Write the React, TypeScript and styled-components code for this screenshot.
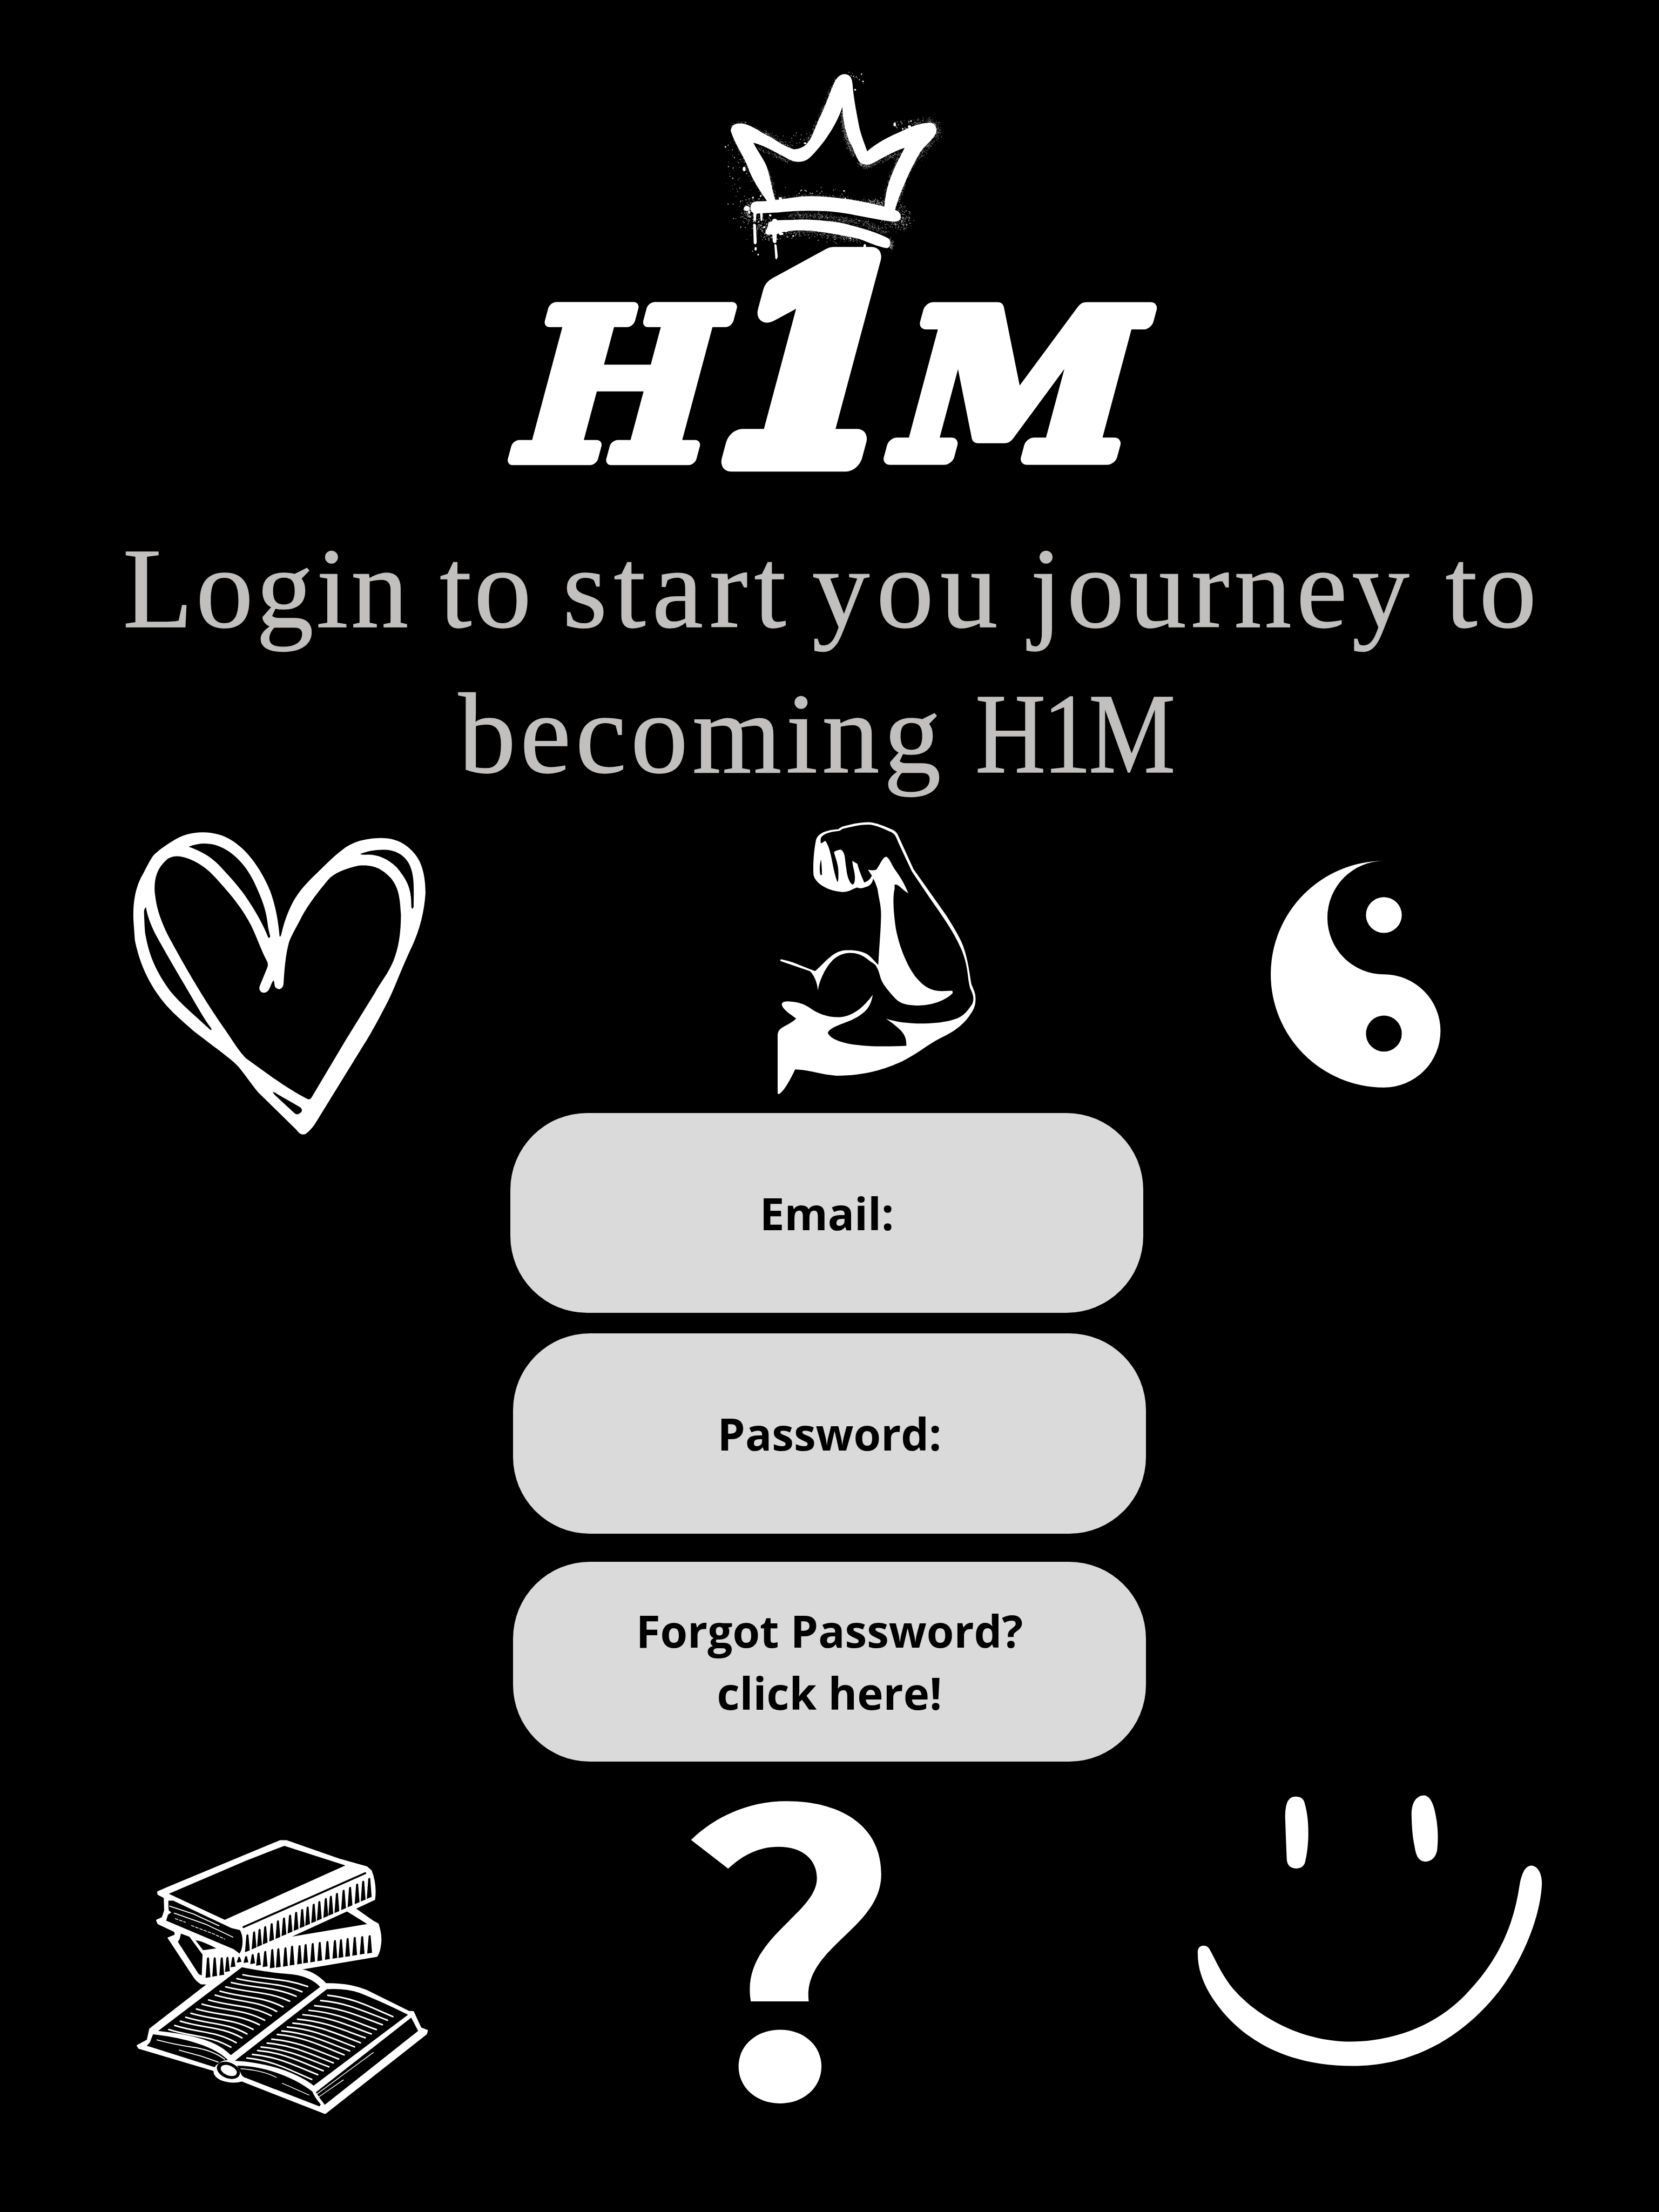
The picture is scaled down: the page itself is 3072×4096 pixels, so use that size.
import React from "react";
import styled, { createGlobalStyle } from "styled-components";

/* Design units: the poster is laid out on a 3456 x 4608 grid. */
const u = (n: number) => `${((n * 8) / 9).toFixed(3)}px`;

const GlobalStyle = createGlobalStyle`
  html, body { margin: 0; padding: 0; background: #000; }
  *, *::before, *::after { box-sizing: border-box; }
`;

const Page = styled.main`
  width: ${u(3456)};
  height: ${u(4608)};
  overflow: hidden;
  background: #000;
  color: #fff;
  display: flex;
  flex-direction: column;
`;

const LogoArea = styled.header`
  flex: none;
  height: ${u(1010)};
  padding-top: ${u(120)};
  padding-left: ${u(1030)};
`;

const Art = styled.svg<{ $w: number; $h: number; $ml?: number; $mt?: number }>`
  display: block;
  flex: none;
  width: ${(p) => u(p.$w)};
  height: ${(p) => u(p.$h)};
  margin-left: ${(p) => u(p.$ml ?? 0)};
  margin-top: ${(p) => u(p.$mt ?? 0)};
  overflow: visible;
  fill: #fff;
`;

const Heading = styled.h1`
  flex: none;
  margin: 0;
  height: ${u(680)};
  padding-top: ${u(66)};
  font-family: "Liberation Serif", "Times New Roman", serif;
  font-weight: 400;
  font-size: ${u(239)};
  line-height: ${u(301.6)};
  color: #c1c0be;
  -webkit-text-stroke: 1.5px #c1c0be;
`;

const HeadingLine = styled.span<{ $start: number }>`
  display: flex;
  padding-left: ${(p) => u(p.$start)};
  white-space: pre;
`;

const Word = styled.span<{ $w: number; $ls: number; $sx?: number }>`
  flex: none;
  width: ${(p) => u(p.$w)};
  letter-spacing: ${(p) => u(p.$ls)};
  transform: scaleX(${(p) => p.$sx ?? 1});
  transform-origin: left center;
`;

const IconRow = styled.section<{ $h: number }>`
  flex: none;
  display: flex;
  align-items: flex-start;
  height: ${(p) => u(p.$h)};
`;

const Form = styled.form`
  flex: none;
  margin: 0;
  display: flex;
  flex-direction: column;
  padding-left: ${u(1063.4)};
  height: ${u(1381.4)};
`;

const Field = styled.button<{ $shift?: number; $gap?: number }>`
  flex: none;
  appearance: none;
  border: 0;
  margin: 0 0 ${(p) => u(p.$gap ?? 0)} ${(p) => u(p.$shift ?? 0)};
  padding: 0;
  width: ${u(1318)};
  height: ${u(416.5)};
  border-radius: ${u(160)};
  background: #dadada;
  color: #000;
  display: flex;
  align-items: center;
  justify-content: center;
  text-align: center;
  white-space: pre-line;
  font-family: "Open Sans", "Noto Sans", sans-serif;
  font-weight: 700;
  font-size: ${u(92)};
  line-height: ${u(129.5)};
`;

const Question = styled.span`
  flex: none;
  display: block;
  margin-left: ${u(477)};
  width: ${u(395)};
  height: ${u(646)};
  font-family: "Noto Sans CJK SC", sans-serif;
  font-weight: 700;
  font-size: ${u(799)};
  line-height: ${u(646)};
  color: #fff;
  transform: scaleX(1.18);
  transform-origin: left center;
`;

/* ---------- spray paint grain ---------- */

type Pt = [number, number];

function makeRandom(seed: number) {
  let s = seed;
  return () => {
    s = (s * 1664525 + 1013904223) % 4294967296;
    return s / 4294967296;
  };
}

function grain(line: Pt[], count: number, spread: number, size: number, seed: number) {
  const rnd = makeRandom(seed);
  let d = "";
  for (let i = 0; i < count; i++) {
    const t = rnd() * (line.length - 1);
    const k = Math.floor(t);
    const f = t - k;
    const [x0, y0] = line[k];
    const [x1, y1] = line[k + 1];
    const g = () => rnd() + rnd() + rnd() - 1.5;
    const x = x0 + (x1 - x0) * f + g() * spread;
    const y = y0 + (y1 - y0) * f + g() * spread;
    const r = size * (0.5 + rnd());
    d += `M${x.toFixed(1)} ${y.toFixed(1)}h${r.toFixed(1)}v${r.toFixed(1)}h-${r.toFixed(1)}z`;
  }
  return d;
}

const GRAINS: [Pt[], number, number, number][] = [
  [[[1260, 420], [1350, 400], [1405, 420], [1410, 480], [1350, 550], [1290, 620]], 650, 32, 2.6],
  [[[822, 340], [835, 440], [860, 530], [900, 610]], 500, 20, 2.6],
  [[[925, 660], [980, 675], [1060, 640], [1190, 590]], 380, 20, 2.6],
  [[[1190, 600], [1130, 730], [1095, 900]], 400, 18, 2.6],
  [[[1300, 600], [1230, 740], [1170, 900]], 180, 15, 2.6],
  [[[130, 430], [190, 405], [330, 465], [400, 500], [500, 565]], 350, 17, 2.6],
  [[[600, 530], [660, 410], [740, 230], [780, 140]], 260, 14, 2.6],
  [[[290, 560], [400, 610], [500, 650]], 150, 15, 2.6],
  [[[350, 700], [385, 790], [400, 880]], 140, 13, 2.6],
  [[[140, 500], [220, 680], [330, 870]], 150, 18, 2.6],
  [[[400, 880], [640, 860], [850, 880], [1090, 920]], 260, 20, 3],
  [[[980, 900], [1080, 905]], 110, 24, 3.5],
  [[[1170, 910], [1215, 1000], [1190, 1045], [1080, 1035]], 240, 46, 3.6],
  [[[480, 985], [640, 985], [800, 1005], [960, 1030], [1090, 1090]], 750, 24, 2.6],
  [[[440, 1090], [640, 1090], [800, 1115], [920, 1140]], 350, 22, 3],
  [[[1120, 1130], [1130, 1190]], 110, 18, 2.6],
  [[[260, 890], [225, 950], [250, 1000], [340, 1040], [350, 1110]], 280, 50, 4.4],
  [[[110, 560], [160, 640], [160, 800], [180, 1000], [290, 1220]], 60, 60, 5],
  [[[480, 520], [600, 480]], 24, 50, 4],
  [[[440, 830], [840, 830]], 20, 36, 5],
  [[[870, 100], [950, 150]], 18, 30, 5],
  [[[1150, 400], [1240, 420]], 22, 34, 5],
  [[[300, 1130], [540, 1110], [860, 1140]], 40, 34, 5],
];

const GRAIN_PATH = GRAINS.map(([l, n, s, z], i) => grain(l, n, s, z, 17 + i * 101)).join("");

const BLOBS: [number, number, number, number][] = [
  [209, 695, 9, 14], [1150, 417, 8, 12], [225, 942, 18, 16], [436, 880, 10, 9], [903, 200, 6, 6],
  [92, 557, 5, 5], [952, 148, 5, 5], [943, 102, 4, 4], [1252, 396, 5, 5], [566, 828, 4, 4],
  [833, 832, 5, 5], [841, 878, 5, 5], [872, 1128, 5, 5], [963, 1176, 8, 12], [516, 1114, 6, 5],
  [590, 534, 8, 6], [372, 985, 8, 7], [264, 874, 6, 6], [312, 864, 5, 6], [281, 1194, 7, 11],
  [297, 1230, 5, 6], [240, 965, 6, 12], [335, 1058, 7, 6], [400, 1020, 16, 14], [440, 1100, 14, 8],
  [470, 1082, 14, 7], [360, 1090, 18, 16], [372, 1045, 14, 20], [1242, 430, 10, 8], [1200, 445, 5, 5],
];

function Crown() {
  return (
    <g transform="translate(1480 120) scale(0.33333)">
      <path d="M125 455C130 420 150 410 190 410C250 415 300 458 340 478C400 505 450 552 520 572C560 570 590 555 610 525C640 490 660 410 690 355C720 290 740 230 770 160C790 115 815 100 840 102C875 105 885 135 887 170C895 270 915 360 930 440C945 500 965 545 978 585C1040 530 1110 495 1180 465C1240 435 1300 408 1370 405C1400 408 1412 430 1411 460C1405 500 1340 545 1310 590C1270 660 1240 720 1215 780C1185 850 1165 900 1150 960L1085 940C1090 850 1110 780 1140 710C1160 660 1190 610 1212 563C1130 590 1080 625 1010 660C980 675 945 670 925 645C905 610 890 560 865 520C840 450 825 390 823 308C800 380 760 450 710 520C670 570 640 610 605 635C570 655 530 655 495 638C420 600 340 550 267 531C290 580 330 630 350 680C375 750 380 820 408 900L355 900C300 820 260 760 235 690C210 620 150 540 125 455Z" />
      <path d="M250 930C250 905 270 897 300 897C400 895 480 875 560 868C640 860 740 868 840 882C940 895 1060 920 1150 950C1180 958 1190 980 1188 1000C1180 1025 1150 1028 1120 1022C1030 1010 920 985 840 972C700 950 560 955 470 962C400 970 330 970 280 975C255 970 248 955 250 930Z" />
      <path d="M345 1080C360 1050 365 1020 400 1015C500 1015 560 1008 620 1012C720 1018 800 1025 870 1045C950 1065 1050 1095 1110 1128C1130 1145 1125 1190 1100 1190C1040 1180 980 1150 920 1130C820 1110 740 1095 650 1083C560 1078 480 1075 420 1100C390 1110 350 1110 345 1080Z" />
      <path d="M267 965L286 965L283 1015Q276 1026 269 1014ZM308 965L325 965L323 1016Q317 1025 312 1016ZM265 1040Q274 1032 283 1044L288 1155Q278 1176 269 1158ZM384 1090L413 1090L411 1152Q399 1168 388 1148ZM398 1168Q405 1160 412 1172L419 1240Q413 1268 404 1254Z" />
      {BLOBS.map(([x, y, rx, ry]) => (
        <ellipse key={`${x}-${y}`} cx={x} cy={y} rx={rx} ry={ry} />
      ))}
      <path d={GRAIN_PATH} opacity="0.7" />
    </g>
  );
}

const logoLetter = {
  fontFamily: '"DejaVu Serif", serif',
  fontWeight: 700,
  stroke: "#fff",
  strokeLinejoin: "round" as const,
};

function Logo() {
  return (
    <Art $w={1400} $h={890} viewBox="1030 120 1400 890" role="img" aria-label="H1M">
      <Crown />
      <g {...logoLetter}>
        <text transform="translate(1051 955) skewX(-15)" fontSize="429" strokeWidth="27">H</text>
        <text transform="translate(1458 954) skewX(-15) scale(0.94 1)" fontSize="555" strokeWidth="56">1</text>
        <text transform="translate(1839 952) skewX(-15) scale(1.055 1)" fontSize="421" strokeWidth="32">M</text>
      </g>
    </Art>
  );
}

function Heart() {
  return (
    <Art $w={680} $h={700} $ml={250} $mt={10} viewBox="0 0 1568 1568" preserveAspectRatio="none">
      <path
        fillRule="evenodd"
        d="M65 485C62 400 75 330 110 272C130 235 145 205 160 185C190 155 230 130 270 107C315 82 360 76 405 76C480 78 535 105 580 145C640 195 690 275 722 350C750 425 762 500 767 562Q772 566 776 550C790 490 810 440 835 395C865 345 905 305 945 268C990 225 1030 185 1075 153C1120 122 1170 105 1255 103C1330 104 1375 130 1415 175C1455 220 1468 290 1468 360C1462 450 1440 530 1405 605C1360 695 1325 790 1290 860C1250 935 1210 1010 1170 1070L935 1440Q915 1467 893 1483Q875 1492 858 1476Q845 1460 830 1447L665 1290C630 1250 600 1205 572 1173C540 1135 440 1070 350 1000C280 940 230 900 180 830C120 745 90 665 72 580Z
        M167 335C168 265 195 230 230 200C255 183 290 185 320 196C390 220 430 255 475 305C540 375 590 435 630 510C660 570 680 630 708 680Q713 692 709 705L671 795Q667 812 680 822Q700 830 715 812C722 800 730 775 738 767C742 775 742 785 745 797Q755 808 765 808Q782 806 786 785C790 720 795 650 812 590C825 555 850 515 870 477C895 430 930 380 1000 298C1030 265 1080 247 1145 232C1220 225 1260 248 1300 288C1340 335 1345 380 1350 460C1350 560 1335 640 1300 705C1280 745 1250 780 1225 825L1085 1045L920 1315Q912 1326 900 1320C810 1275 740 1225 605 1130C570 1095 550 1060 500 990C400 850 310 700 230 555C200 495 180 440 173 395C170 370 166 355 167 335Z
        M330 143C385 122 440 125 480 143C560 175 620 250 655 330C690 405 705 450 712 520L722 562Q718 574 712 566C690 510 650 440 600 370C560 315 510 265 475 228C430 185 390 165 330 143Z
        M125 425Q115 435 116 450C117 480 118 510 121 545C140 650 170 720 240 815C300 885 360 930 435 998Q443 1003 438 990C400 940 370 885 330 820C260 705 215 630 170 550C145 500 132 465 125 425Z
        M1153 178C1190 162 1240 155 1285 158C1340 163 1375 195 1390 225C1415 275 1412 330 1411 425L1404 434L1400 425C1400 350 1390 310 1330 240C1290 200 1240 180 1190 180Q1170 182 1153 178Z
        M733 1287Q745 1290 755 1297L868 1360Q880 1372 870 1383Q855 1398 840 1388L742 1300Z"
      />
    </Art>
  );
}

function Arm() {
  return (
    <Art $w={480} $h={620} $ml={660} viewBox="0 0 1440 1568" preserveAspectRatio="none">
      <path
        fillRule="evenodd"
        d="M330 155C340 115 400 98 470 95Q480 88 495 82C550 68 610 58 660 58C700 58 760 80 810 98Q835 108 845 130L940 305C1010 390 1080 470 1145 550C1190 610 1230 665 1250 710C1280 780 1290 850 1300 905C1310 935 1330 955 1328 990C1328 1020 1320 1040 1300 1065C1260 1120 1200 1160 1110 1195C1020 1235 960 1280 870 1318C760 1360 640 1393 460 1394C370 1390 290 1363 200 1361C165 1425 130 1475 100 1491L91 1488L91 1180Q92 1155 115 1143C150 1125 190 1110 207 1092C170 1070 115 1040 117 1015Q120 1003 150 1002C250 1005 280 1030 320 1052C380 1080 430 1088 490 1085C570 1075 630 1030 685 968C680 1000 665 1035 630 1060C560 1110 490 1115 430 1145Q405 1158 405 1170C425 1200 480 1218 560 1229C650 1240 770 1242 896 1236C895 1180 880 1160 769 1093C880 1125 1050 1125 1160 1105C1240 1088 1260 1075 1308 1015C1322 985 1310 960 1295 935C1275 880 1285 820 1240 730C1190 630 1110 540 1040 455L930 318L845 165C830 130 820 118 800 110C740 88 700 72 660 71C600 70 540 85 495 94Q480 105 465 105C420 108 375 120 362 140Q357 155 361 170Q375 165 388 156C430 200 430 300 465 374Q473 370 470 310C468 275 450 240 443 216Q460 205 485 203C515 215 510 250 520 300C525 350 545 385 562 387Q575 380 574 345C572 315 558 285 558 262L590 278C600 315 615 340 632 376Q665 368 680 340L655 308Q685 315 708 308C730 285 745 245 768 240C790 245 800 280 830 315C865 355 890 395 908 434Q875 415 850 395Q830 383 822 388L822 410C810 450 813 520 830 620C850 710 900 820 960 880C1010 930 1060 950 1120 948L1180 946Q1190 952 1182 962C1120 1010 1030 1025 960 1024C900 1022 860 1015 830 990C790 955 745 910 735 880C728 860 722 840 715 830C700 800 690 805 665 788C620 755 580 747 540 747C480 750 440 775 410 810C375 850 350 900 342 945C340 900 315 860 292 843L110 790Q104 784 112 780C180 790 250 820 325 843C390 795 430 745 500 734C560 730 610 735 650 753C680 770 700 795 720 810C725 720 735 640 737 560C740 500 725 470 715 410Q700 370 688 355C685 375 670 395 640 400C620 408 600 408 588 402Q560 410 540 420Q510 430 470 423C400 415 325 380 315 335C312 290 315 220 330 155Z
        M361 258C352 290 352 320 360 338L368 335C368 310 366 280 363 258Z"
      />
    </Art>
  );
}

function YinYang() {
  return (
    <Art $w={450} $h={540} $ml={530} $mt={70} viewBox="0 0 1350 1568" preserveAspectRatio="none">
      <path d="M849 99A707 685 0 0 0 849 1469A354 342 0 0 0 849 785A353 343 0 0 1 849 99Z" />
      <ellipse cx="849" cy="426" rx="112" ry="108" />
      <ellipse cx="849" cy="1143" rx="112" ry="109" fill="#000" />
    </Art>
  );
}

const TEETH_TOP = [607, 640, 667, 695, 727, 758, 788, 818, 848, 878, 905, 935, 963, 995, 1020, 1050, 1083, 1115, 1150, 1180, 1210];

const TEETH_LOW: [number, number, number][] = [
  [412, 678, 782], [445, 678, 776], [480, 678, 770], [508, 676, 752], [536, 676, 728], [566, 676, 704],
  [600, 672, 706], [633, 662, 712], [662, 654, 720], [695, 646, 727], [730, 636, 733], [760, 632, 730],
  [795, 627, 725], [828, 619, 719], [865, 616, 713], [895, 611, 708], [930, 605, 703], [965, 600, 697],
  [1003, 595, 690], [1040, 590, 684], [1070, 586, 680], [1103, 580, 675], [1138, 574, 669], [1175, 570, 663], [1212, 565, 658],
];

const LEFT_LINES: [number, number, number, number][] = [
  [585, 768, 905, 828], [555, 788, 877, 855], [528, 808, 848, 878], [500, 830, 816, 903], [472, 852, 783, 932],
  [448, 872, 752, 955], [415, 897, 725, 977], [383, 918, 692, 1000], [355, 943, 666, 1023], [328, 965, 635, 1047],
  [302, 985, 605, 1070], [275, 1005, 580, 1090], [248, 1027, 552, 1115], [218, 1048, 525, 1138],
];

const RIGHT_LINES: [number, number, number, number][] = [
  [1005, 873, 1327, 982], [970, 900, 1300, 1000], [940, 926, 1275, 1023], [912, 950, 1245, 1048], [882, 972, 1220, 1070],
  [855, 995, 1190, 1090], [832, 1015, 1166, 1115], [805, 1035, 1137, 1136], [778, 1055, 1113, 1157], [755, 1073, 1086, 1177],
  [728, 1097, 1058, 1198], [705, 1117, 1032, 1218], [675, 1137, 1010, 1238], [658, 1155, 982, 1258], [632, 1175, 955, 1278], [605, 1193, 925, 1302],
];

const tooth = (x: number, top: number, bottom: number, slope: number) =>
  `M${x - 5} ${top + 6}Q${x} ${top - 4} ${x + 5} ${top + 4}L${x + 12} ${bottom - slope}L${x - 12} ${bottom + slope}Z`;

function Books() {
  return (
    <Art $w={660} $h={640} $ml={260} $mt={100} viewBox="0 0 1568 1568" preserveAspectRatio="none">
      <path
        stroke="#fff"
        strokeWidth="6"
        strokeLinejoin="round"
        d="M163 345L212 323L770 84L800 84L1060 178L1198 218L1220 238Q1246 310 1236 384L1140 430L1232 497L1254 509Q1272 570 1266 610Q1262 650 1248 674L860 741C910 745 955 770 995 814C1090 812 1150 830 1200 850L1405 955L1428 957L1465 1040L1497 1052L1493 1070L992 1476L580 1310Q530 1325 475 1303Q440 1285 442 1257L70 1143L62 1130L112 1102L124 1045L412 815L378 814Q355 800 340 775L215 580L250 566L248 548L165 507L158 490L186 477L198 440L196 374L165 358Z"
      />
      <g fill="#000">
        <path d="M218 355L600 186L790 110L1092 210L495 488Z" />
        <path d="M216 390L240 390L528 530L570 540Q584 565 583 600Q582 640 568 660L540 638L205 492L214 462L230 450L218 440L216 420Z" />
        <path d="M828 573L1100 445L1200 509Z" />
        <path d="M278 558L320 574L385 665L381 772L366 765L263 600L272 585Z" />
        <path d="M350 592Q380 595 453 633L388 643Z" />
        <path d={TEETH_TOP.map((x) => tooth(x, 560 - (x - 610) * 0.478, 647 - (x - 610) * 0.452, 5)).join("")} />
        <path d={TEETH_LOW.map(([x, t, b]) => tooth(x, t, b, 2)).join("")} />
        <path d="M580 730C680 752 760 760 830 766Q920 778 967 830L525 1178C460 1110 350 1075 165 1055Z" />
        <path d="M1000 842Q1090 836 1160 860Q1260 900 1402 972L935 1334C850 1265 700 1215 545 1207Z" />
        <path d="M140 1072C260 1085 440 1125 510 1203Q480 1205 465 1222Q450 1228 446 1240L108 1130Q126 1118 130 1098Z" />
        <path d="M556 1232C700 1232 850 1300 928 1364Q940 1395 970 1430L964 1440L600 1295Q580 1290 572 1265Z" />
        <path d="M1418 987L1452 1055L990 1432Q965 1400 946 1368Z" />
      </g>
      <path d="M588 525L1190 250" stroke="#000" strokeWidth="10" strokeLinecap="round" />
      <g fill="none" stroke="#fff" strokeWidth="8" strokeLinecap="round">
        {LEFT_LINES.map(([x0, y0, x1, y1]) => {
          const dx = x1 - x0;
          const dy = y1 - y0;
          return <path key={x0} d={`M${x0} ${y0}C${x0 + dx * 0.4} ${y0 + dy * 0.45} ${x0 + dx * 0.65} ${y0 + dy * 0.3} ${x1} ${y1}`} />;
        })}
        {RIGHT_LINES.map(([x0, y0, x1, y1]) => {
          const dx = x1 - x0;
          const dy = y1 - y0;
          return <path key={x0} d={`M${x0} ${y0}C${x0 + dx * 0.4} ${y0 + dy * 0.12} ${x0 + dx * 0.65} ${y0 + dy * 0.55} ${x1} ${y1}`} />;
        })}
      </g>
      <g fill="none" stroke="#fff" strokeWidth="5" strokeLinecap="round">
        <path d="M222 418L340 458L466 518M245 454L400 510L535 576M160 1101Q250 1125 330 1137Q430 1150 495 1200M270 1153L380 1184L462 1214" />
        <path d="M950 1378L1150 1226L1230 1165M960 1392L1082 1305M575 1248Q680 1255 750 1292M780 1322L912 1382" strokeWidth="4" />
        <path d="M250 482L300 500M330 517L440 560L495 586" strokeWidth="4" strokeDasharray="14 8" />
      </g>
      <g transform="rotate(24 513 1256)">
        <ellipse cx="513" cy="1256" rx="60" ry="40" fill="#000" />
        <ellipse cx="515" cy="1256" rx="42" ry="25" />
      </g>
    </Art>
  );
}

function Smile() {
  return (
    <Art $w={780} $h={640} $ml={668} viewBox="0 0 1568 1568" preserveAspectRatio="none">
      <path d="M480 104Q510 104 517 135C532 200 533 250 533 300C532 360 526 410 518 445Q508 471 482 471Q448 470 443 430C440 350 438 280 436 210C436 170 440 145 447 127Q458 104 480 104Z" />
      <path d="M1016 98C1045 98 1060 150 1068 210C1075 260 1078 310 1073 370C1070 410 1050 436 1022 436C990 434 983 395 978 360C968 300 966 250 965 190C966 150 975 128 985 115Q1000 98 1016 98Z" />
      <path d="M70 890Q74 865 95 865Q112 866 120 885C145 940 165 1000 205 1065C290 1200 480 1354 710 1355C940 1352 1110 1230 1210 1090C1340 920 1395 740 1417 560Q1422 515 1437 480Q1450 456 1468 456C1500 460 1512 510 1511 550C1505 720 1430 940 1330 1100C1200 1300 1000 1480 715 1479C430 1478 230 1330 120 1110C85 1035 68 970 70 890Z" />
    </Art>
  );
}

export default function App() {
  return (
    <>
      <GlobalStyle />
      <Page>
        <LogoArea>
          <Logo />
        </LogoArea>
        <Heading>
          <HeadingLine $start={256}>
            <Word $w={660} $ls={6}>Login</Word>
            <Word $w={256} $ls={5}>to</Word>
            <Word $w={520} $ls={13.5}>start</Word>
            <Word $w={454} $ls={14}>you</Word>
            <Word $w={865} $ls={10}>journey</Word>
            <Word $w={200} $ls={4}>to</Word>
          </HeadingLine>
          <HeadingLine $start={955}>
            <Word $w={1077} $ls={9}>becoming</Word>
            <Word $w={420} $ls={-7} $sx={0.85}>H1M</Word>
          </HeadingLine>
        </Heading>
        <IconRow $h={628.6}>
          <Heart />
          <Arm />
          <YinYang />
        </IconRow>
        <Form>
          <Field type="button" $gap={43}>Email:</Field>
          <Field type="button" $shift={5.6} $gap={58.4}>Password:</Field>
          <Field type="button" $shift={5.6}>{"Forgot Password?\nclick here!"}</Field>
        </Form>
        <IconRow $h={908}>
          <Books />
          <Question>?</Question>
          <Smile />
        </IconRow>
      </Page>
    </>
  );
}
